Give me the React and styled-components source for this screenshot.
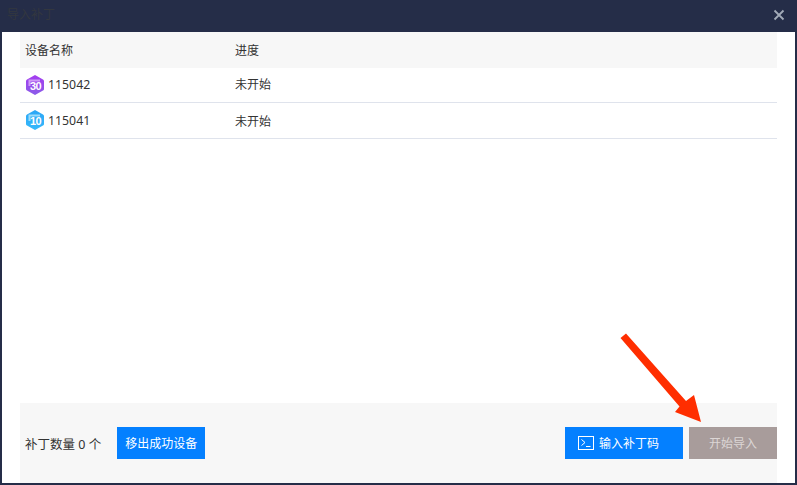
import styled, { createGlobalStyle } from "styled-components";

const GlobalStyle = createGlobalStyle`
    html, body {
        margin: 0;
        padding: 0;
        background: #fff;
    }
    * {
        box-sizing: border-box;
    }
`;

const Dialog = styled.div`
    position: relative;
    width: 797px;
    height: 485px;
    display: flex;
    flex-direction: column;
    background: #fff;
    border-left: 2px solid #252d48;
    border-right: 2px solid #252d48;
    border-bottom: 2px solid #252d48;
    font-family: "Noto Sans", "Noto Sans CJK SC", sans-serif;
    font-size: 12px;
    color: #333;
`;

const TitleBar = styled.div`
    height: 32px;
    margin: 0 -2px;
    padding: 0 12px 4px 7px;
    flex-shrink: 0;
    display: flex;
    align-items: center;
    justify-content: space-between;
    background: #252d48;
    color: #33373f;
`;

const CloseButton = styled.button`
    padding: 0;
    width: 12px;
    height: 12px;
    display: flex;
    border: none;
    background: none;
    margin-top: 2px;
`;

const Content = styled.div`
    flex-grow: 1;
    display: flex;
    flex-direction: column;
    justify-content: space-between;
    padding: 0 18px;
`;

const Table = styled.div`
    display: flex;
    flex-direction: column;
`;

const Row = styled.div`
    display: grid;
    grid-template-columns: 210px 1fr;
    align-items: center;
    padding: 0 5px;
    height: ${props => props.$height};
    background: ${props => (props.$head ? "#f7f7f7" : "#fff")};
    ${props => (props.$head ? "" : "border-bottom: 1px solid #dfe3ec;")}
`;

const Progress = styled.span`
    margin-top: ${props => props.$offset || "0"};
`;

const DeviceName = styled.div`
    display: flex;
    align-items: center;
    gap: 3px;
    font-size: 12.3px;
    margin-top: -1px;
`;

const Footer = styled.div`
    height: 80px;
    display: flex;
    align-items: center;
    justify-content: space-between;
    padding-left: 5px;
    background: #f7f7f7;
`;

const FooterGroup = styled.div`
    display: flex;
    align-items: center;
    gap: ${props => props.$gap || "6px"};
`;

const Count = styled.span`
    font-size: 12.5px;
`;

const Button = styled.button`
    height: 32px;
    width: ${props => props.$width || "88px"};
    padding: 0 ${props => props.$endPad || "0"} 0 0;
    display: flex;
    align-items: center;
    justify-content: center;
    gap: 5px;
    border: none;
    font-family: inherit;
    font-size: 12px;
    background: ${props => (props.$disabled ? "#a89c9b" : "#0480ff")};
    color: ${props => (props.$disabled ? "#dcd6d5" : "#fff")};
`;

const Arrow = styled.svg`
    position: absolute;
    left: -2px;
    top: 0;
    pointer-events: none;
`;

function LevelBadge({ label, from, to, light }) {
    const id = `badge-${label}`;
    return (
        <svg width="20" height="22" viewBox="0 0 20 22">
            <defs>
                <linearGradient id={id} x1="0" y1="0" x2="0" y2="1">
                    <stop offset="0" stopColor={from} />
                    <stop offset="1" stopColor={to} />
                </linearGradient>
            </defs>
            <path d="M10 1 L18 5.5 Q19 6 19 7 V15 Q19 16 18 16.5 L10 21 L2 16.5 Q1 16 1 15 V7 Q1 6 2 5.5 Z" fill={`url(#${id})`} />
            <path d="M3.5 5.5 H15 V7.5 H5.5 V12 H3.5 Z" fill={light} />
            <text x="10.5" y="16" textAnchor="middle" fontSize="11" fontWeight="700" letterSpacing="-0.5" fontFamily="'Liberation Sans', sans-serif" fill="#fff">{label}</text>
        </svg>
    );
}

export default function App() {
    return (
        <>
            <GlobalStyle />
            <Dialog>
                <TitleBar>
                    <span>导入补丁</span>
                    <CloseButton>
                        <svg width="12" height="12" viewBox="0 0 12 12">
                            <path d="M1.5 1.5 L10.5 10.5 M10.5 1.5 L1.5 10.5" stroke="#a3abb8" strokeWidth="1.8" fill="none" />
                        </svg>
                    </CloseButton>
                </TitleBar>
                <Content>
                    <Table>
                        <Row $head $height="36px">
                            <span>设备名称</span>
                            <span>进度</span>
                        </Row>
                        <Row $height="35px">
                            <DeviceName>
                                <LevelBadge label="30" from="#a53cf0" to="#8a5ce8" light="#cf9bf7" />
                                115042
                            </DeviceName>
                            <Progress $offset="-2px">未开始</Progress>
                        </Row>
                        <Row $height="36px">
                            <DeviceName>
                                <LevelBadge label="10" from="#2ba6f5" to="#35b9fb" light="#9bdcfb" />
                                115041
                            </DeviceName>
                            <Progress>未开始</Progress>
                        </Row>
                    </Table>
                    <Footer>
                        <FooterGroup $gap="16px">
                            <Count>补丁数量 0 个</Count>
                            <Button>移出成功设备</Button>
                        </FooterGroup>
                        <FooterGroup>
                            <Button $width="118px" $endPad="11px">
                                <svg width="16" height="14" viewBox="0 0 16 14">
                                    <rect x="0.5" y="0.5" width="15" height="13" fill="none" stroke="#fff" />
                                    <path d="M3.5 3.5 L7 6.5 L3.5 9.5" fill="none" stroke="#fff" />
                                    <path d="M8 10.5 H12.5" fill="none" stroke="#fff" />
                                </svg>
                                输入补丁码
                            </Button>
                            <Button $disabled>开始导入</Button>
                        </FooterGroup>
                    </Footer>
                </Content>
                <Arrow width="797" height="485" viewBox="0 0 797 485">
                    <polygon points="620.5,338 626,333.5 686,401 694,395 701,422 675,412 679.5,406.5" fill="#ff2e00" />
                </Arrow>
            </Dialog>
        </>
    );
}
